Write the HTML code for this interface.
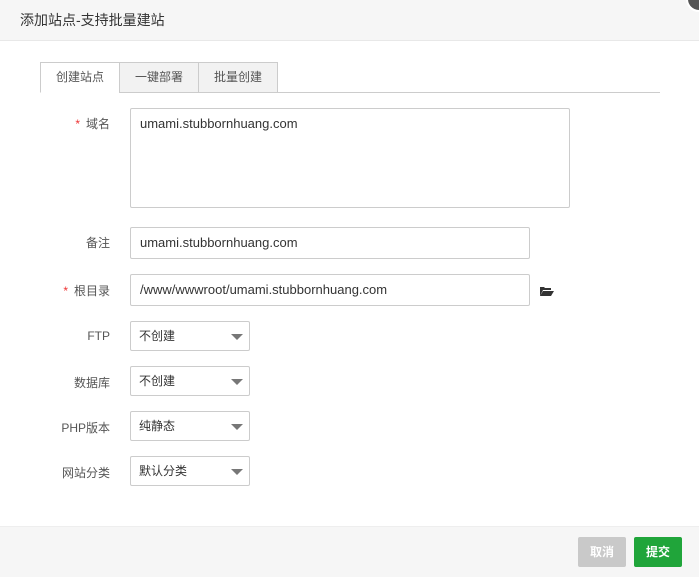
<!DOCTYPE html>
<html><head><meta charset="utf-8"><style>
*{box-sizing:border-box;margin:0;padding:0}
body{width:699px;height:577px;background:#fff;font-family:"Liberation Sans","Noto Sans CJK SC",sans-serif;font-size:12px;color:#555;position:relative;overflow:hidden}
.hd{position:absolute;left:0;top:0;width:699px;height:41px;background:#f6f6f6;border-bottom:1px solid #e8e8e8;font-size:14px;color:#333;line-height:40px;padding-left:20px}
.close{position:absolute;left:686px;top:-14px;width:26px;height:26px;border-radius:50%;background:#555;border:2px solid #fff}
.tabs{position:absolute;left:40px;top:62px;width:620px;height:31px;border-bottom:1px solid #ccc}
.tab{position:absolute;top:0;height:31px;border:1px solid #ccc;background:#f2f2f2;line-height:29px;text-align:center;color:#555;font-size:12px}
.tab.a{background:#fff;border-bottom-color:#fff}
.lbl{position:absolute;right:589px;text-align:right;color:#555;font-size:12px}
.lbl i{color:#e33;font-style:normal;margin-right:6px}
.inp{position:absolute;left:130px;border:1px solid #ccc;border-radius:2px;color:#333;font-size:13px;padding-left:9px}
.sel{position:absolute;left:130px;width:120px;height:30px;border:1px solid #ccc;border-radius:2px;line-height:28px;padding-left:8px;color:#333;font-size:12px}
.sel:after{content:"";position:absolute;right:6px;top:12px;border-left:6px solid transparent;border-right:6px solid transparent;border-top:6px solid #777}
.ft{position:absolute;left:0;top:526px;width:699px;height:51px;background:#f6f6f6;border-top:1px solid #eee}
.btn{position:absolute;top:537px;width:48px;height:30px;border-radius:2px;color:#fff;font-size:12px;font-weight:bold;line-height:30px;text-align:center}
</style></head><body>
<div class="hd">添加站点-支持批量建站</div>
<div class="close"></div>
<div class="tabs">
<div class="tab a" style="left:0;width:80px">创建站点</div>
<div class="tab" style="left:79px;width:80px">一键部署</div>
<div class="tab" style="left:158px;width:80px">批量创建</div>
</div>
<div class="lbl" style="top:115px"><i>*</i>域名</div>
<div class="inp" style="top:108px;width:440px;height:100px;padding-top:7px;line-height:16px">umami.stubbornhuang.com</div>
<div class="lbl" style="top:234px">备注</div>
<div class="inp" style="top:227px;width:400px;height:32px;line-height:30px">umami.stubbornhuang.com</div>
<div class="lbl" style="top:282px"><i>*</i>根目录</div>
<div class="inp" style="top:274px;width:400px;height:32px;line-height:30px">/www/wwwroot/umami.stubbornhuang.com</div>
<svg style="position:absolute;left:539px;top:285px" width="16" height="12" viewBox="0 0 16 12"><path d="M1 2h4l1 1h6v2H4L1 11z" fill="#333"/><path d="M4 6h11l-3 5H1z" fill="#333"/></svg>
<div class="lbl" style="top:329px">FTP</div>
<div class="sel" style="top:321px">不创建</div>
<div class="lbl" style="top:374px">数据库</div>
<div class="sel" style="top:366px">不创建</div>
<div class="lbl" style="top:419px">PHP版本</div>
<div class="sel" style="top:411px">纯静态</div>
<div class="lbl" style="top:464px">网站分类</div>
<div class="sel" style="top:456px">默认分类</div>
<div class="ft"></div>
<div class="btn" style="left:578px;background:#c9c9c9">取消</div>
<div class="btn" style="left:634px;background:#20a53a">提交</div>
</body></html>
